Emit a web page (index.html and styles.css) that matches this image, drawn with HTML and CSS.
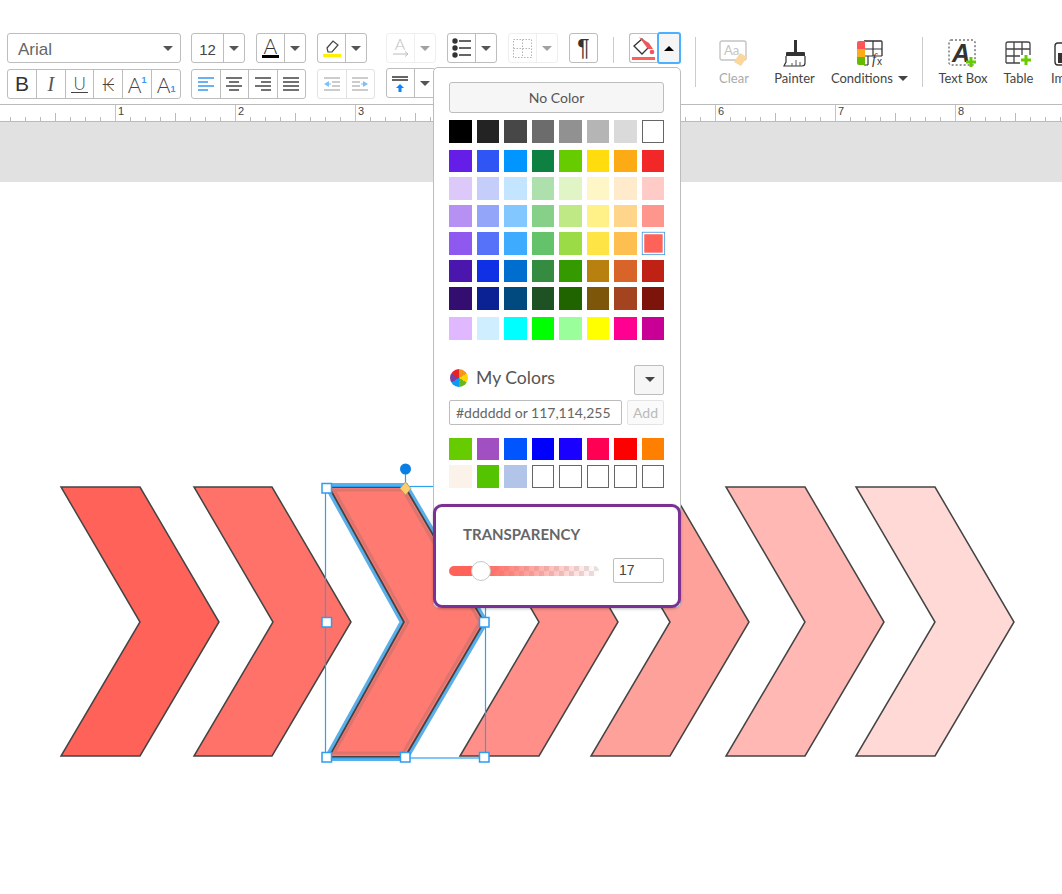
FILE: index.html
```html
<!DOCTYPE html>
<html lang="en">
<head>
<meta charset="utf-8">
<title>Shape fill color</title>
<link rel="stylesheet" href="styles.css">
</head>
<body>
<div class="page">
  <header class="toolbar">
    <div class="rows">
      <div class="row">
        <div class="grp font-select"><span class="font-name">Arial</span><i class="caret"></i></div>
        <div class="grp size"><div class="cell w32 size-val">12</div><div class="cell arrow"><i class="caret"></i></div></div>
        <div class="grp">
          <div class="cell w28"><svg width="27" height="28" viewBox="0 0 27 28"><text x="13.500" y="20" class="ic-a">A</text><rect x="5" y="21" width="17" height="3" fill="#000"/></svg></div>
          <div class="cell arrow"><i class="caret"></i></div>
        </div>
        <div class="grp">
          <div class="cell w28"><svg width="27" height="28" viewBox="0 0 27 28"><path d="M9 14l6-7 5 4-6 7h-4z" fill="#fff" stroke="#444" stroke-width="1.200"/><rect x="5" y="20" width="18" height="3" fill="#ffef00"/></svg></div>
          <div class="cell arrow"><i class="caret"></i></div>
        </div>
        <div class="grp disabled gap-l">
          <div class="cell w28"><svg width="27" height="28" viewBox="0 0 27 28"><text x="13" y="16" class="ic-a small">A</text><path d="M6 20h15m-3-2.500l3 2.500-3 2.500" fill="none" stroke="#888" stroke-width="1"/></svg></div>
          <div class="cell arrow"><i class="caret"></i></div>
        </div>
        <div class="grp">
          <div class="cell w28"><svg width="27" height="28" viewBox="0 0 27 28"><g fill="#333"><circle cx="7" cy="7" r="2.700"/><circle cx="7" cy="14" r="2.700"/><circle cx="7" cy="21" r="2.700"/></g><path d="M11 7h12M11 14h12M11 21h12" stroke="#333" stroke-width="1.300"/></svg></div>
          <div class="cell arrow"><i class="caret"></i></div>
        </div>
        <div class="grp disabled">
          <div class="cell w28"><svg width="27" height="28" viewBox="0 0 27 28"><path d="M4.500 5.500h18v18h-18zM4.500 14.500h18M13.500 5.500v18" fill="none" stroke="#777" stroke-width="1" stroke-dasharray="1.500 1.500"/></svg></div>
          <div class="cell arrow"><i class="caret"></i></div>
        </div>
        <div class="grp pilcrow"><div class="cell">¶</div></div>
        <div class="vsep short"></div>
        <div class="fill-ctl">
          <div class="fill-main"><svg width="26" height="29" viewBox="0 0 26 29"><path d="M3 12l8-7 7 8-7 7z" fill="#fff" stroke="#333" stroke-width="1.300"/><path d="M8 3l10 6 4 6h-5z" fill="#f0565a"/><circle cx="21" cy="18" r="2.300" fill="#f0565a"/><rect x="1" y="23" width="23" height="3" fill="#ff5f57"/></svg></div>
          <div class="fill-arrow"><i class="caret up"></i></div>
        </div>
      </div>
      <div class="row row2">
        <div class="grp w-fmt">
          <div class="cell fmt bold">B</div>
          <div class="cell fmt ital">I</div>
          <div class="cell fmt"><span class="under">U</span></div>
          <div class="cell fmt"><span class="strike">K</span></div>
          <div class="cell fmt"><span class="big-a">A</span><sup class="idx up">1</sup></div>
          <div class="cell fmt"><span class="big-a">A</span><sub class="idx">1</sub></div>
        </div>
        <div class="grp w-align">
          <div class="cell fmt"><svg width="16" height="16" viewBox="0 0 16 16"><path d="M0 2h16M0 6h10M0 10h16M0 14h10" stroke="#3a98f0" stroke-width="1.300"/></svg></div>
          <div class="cell fmt"><svg width="16" height="16" viewBox="0 0 16 16"><path d="M0 2h16M3 6h10M0 10h16M3 14h10" stroke="#444" stroke-width="1.300"/></svg></div>
          <div class="cell fmt"><svg width="16" height="16" viewBox="0 0 16 16"><path d="M0 2h16M6 6h10M0 10h16M6 14h10" stroke="#444" stroke-width="1.300"/></svg></div>
          <div class="cell fmt"><svg width="16" height="16" viewBox="0 0 16 16"><path d="M0 2h16M0 6h16M0 10h16M0 14h16" stroke="#444" stroke-width="1.300"/></svg></div>
        </div>
        <div class="grp disabled-soft w-indent">
          <div class="cell fmt"><svg width="16" height="16" viewBox="0 0 16 16"><path d="M0 2h16M8 6h8M8 10h8M0 14h16" stroke="#999" stroke-width="1.200"/><path d="M0 8l5-3v6z" fill="#7cc0f5"/><path d="M4 8h3" stroke="#7cc0f5"/></svg></div>
          <div class="cell fmt"><svg width="16" height="16" viewBox="0 0 16 16"><path d="M0 2h16M0 6h8M0 10h8M0 14h16" stroke="#999" stroke-width="1.200"/><path d="M16 8l-5-3v6z" fill="#7cc0f5"/><path d="M9 8h3" stroke="#7cc0f5"/></svg></div>
        </div>
        <div class="grp valign">
          <div class="cell w28"><svg width="27" height="28" viewBox="0 0 27 28"><path d="M5 8h16M5 11h16" stroke="#333" stroke-width="1.300"/><path d="M13 15l-4 4h2.500v4h3v-4h2.500z" fill="#0a84ff"/></svg></div>
          <div class="cell arrow"><i class="caret"></i></div>
        </div>
      </div>
    </div>
    <div class="vsep tall first"></div>
    <div class="tool w-clear off">
      <svg width="30" height="27" viewBox="0 0 30 27"><rect x="1" y="1" width="26" height="19" rx="2" fill="none" stroke="#c4c4c4" stroke-width="1.400"/><text x="5" y="15" class="ic-aa">Aa</text><path d="M21 13l7 4-6 9-7-4z" fill="#fbd79b"/></svg>
      <span>Clear</span>
    </div>
    <div class="tool w-painter">
      <svg width="24" height="27" viewBox="0 0 24 27"><rect x="11" y="0" width="3" height="12" fill="#333"/><path d="M4 12h17a1 1 0 0 1 1 1v3H3v-3a1 1 0 0 1 1-1z" fill="#333"/><path d="M3 16v6l-2 4h18q3 0 3-3v-7" fill="#fff" stroke="#333" stroke-width="1.200"/><path d="M9 26v-3M13 26v-6M17 26v-4" stroke="#555"/></svg>
      <span>Painter</span>
    </div>
    <div class="tool w-cond">
      <svg width="27" height="27" viewBox="0 0 27 27"><path d="M8 1h17q1 0 1 1v14" fill="none" stroke="#333" stroke-width="1.300"/><path d="M17 1v15M8 9h18M8 16h18M8 25h4M12 16v9" stroke="#333" stroke-width="1.200"/><path d="M3 1h6v8H1V3q0-2 2-2z" fill="#f55"/><rect x="1" y="9" width="8" height="8" fill="#fbad18"/><path d="M1 17h8v8H3q-2 0-2-2z" fill="#66bb00"/><text x="16" y="24" class="ic-fx">f</text><text x="21" y="25" class="ic-fx x">x</text></svg>
      <span>Conditions <i class="caret dark"></i></span>
    </div>
    <div class="vsep tall"></div>
    <div class="tool w-textbox">
      <svg width="30" height="28" viewBox="0 0 30 28"><rect x="1" y="1" width="26" height="25" rx="2" fill="none" stroke="#333" stroke-dasharray="2 2"/><text x="13" y="23" class="ic-box">A</text><path d="M18 23h10M23 18v10" stroke="#66cc00" stroke-width="3"/></svg>
      <span>Text Box</span>
    </div>
    <div class="tool w-table">
      <svg width="28" height="26" viewBox="0 0 28 26"><path d="M1 22V3q0-2 2-2h20q2 0 2 2v11M1 8h24M1 15h14M1 22h14M9 1v21M17 1v13" fill="none" stroke="#444" stroke-width="1.300"/><path d="M16 19h10M21 14v10" stroke="#66cc00" stroke-width="3"/></svg>
      <span>Table</span>
    </div>
    <div class="tool w-image">
      <svg width="24" height="26" viewBox="0 0 24 26"><rect x="1" y="2" width="22" height="22" rx="3" fill="#fff" stroke="#333" stroke-width="1.400"/><rect x="4" y="12" width="16" height="10" fill="#333"/></svg>
      <span>Image</span>
    </div>
  </header>

  <div class="ruler">
    <div class="inch"></div><div class="inch">1</div><div class="inch">2</div><div class="inch">3</div><div class="inch">4</div><div class="inch">5</div><div class="inch">6</div><div class="inch">7</div><div class="inch">8</div>
  </div>
  <div class="band"></div>

  <main class="canvas">
    <svg class="drawing" width="1062" height="712" viewBox="0 182 1062 712">
      <g stroke="#444" stroke-width="1.500" stroke-linejoin="miter">
        <polygon fill="#ff6259" points="61,487 140,487 219,622 140,756 61,756 140,622"/>
        <polygon fill="#ff7269" points="194,487 272,487 351,622 272,756 194,756 273,622"/>
        <polygon fill="#ff8f88" points="460,756 539,622 460,487 539,487 618,622 539,756"/>
        <polygon fill="#ffa19b" points="591,487 670,487 749,622 670,756 591,756 670,622"/>
        <polygon fill="#ffb8b3" points="726,487 805,487 884,622 805,756 726,756 805,622"/>
        <polygon fill="#ffd9d6" points="856,487 935,487 1014,622 935,756 856,756 935,622"/>
      </g>
      <polygon fill="none" stroke="#5aaeea" stroke-width="8" points="329,487 405,487 484,622 405,757 329,757 404,622"/>
      <polygon fill="#ff7b72" stroke="#444" stroke-width="1.800" points="329,487 405,487 484,622 405,757 329,757 404,622"/>
      <polygon fill="#ff7b72" stroke="#dd746e" stroke-width="3" points="334,490 403,490 480,622 403,753 334,753 408,622"/>
      <rect class="sel" x="325.500" y="486.500" width="160" height="271.500"/>
      <line class="sel" x1="405.500" y1="470" x2="405.500" y2="487"/>
      <circle cx="405.500" cy="469" r="5.500" fill="#0a7fe3"/>
      <g class="handles">
        <rect x="322" y="483.500" width="9.500" height="9.500"/>
        <rect x="322" y="617.500" width="9.500" height="9.500"/>
        <rect x="479.500" y="617.500" width="9.500" height="9.500"/>
        <rect x="322" y="752.500" width="9.500" height="9.500"/>
        <rect x="400.500" y="752.500" width="9.500" height="9.500"/>
        <rect x="479.500" y="752.500" width="9.500" height="9.500"/>
      </g>
      <path d="M405.500 482l5.500 6.500-5.500 6.500-5.500-6.500z" fill="#fdcd6f" stroke="#b89a60" stroke-width=".8"/>
    </svg>
  </main>

  <aside class="popover">
    <button class="no-color">No Color</button>
    <div class="swatches s-first">
      <b style="background:#000"></b><b style="background:#232323"></b><b style="background:#474747"></b><b style="background:#6c6c6c"></b><b style="background:#919191"></b><b style="background:#b5b5b5"></b><b style="background:#dadada"></b><b class="empty"></b>
    </div>
    <div class="swatches">
      <b style="background:#651ee8"></b><b style="background:#2f55f5"></b><b style="background:#0095ff"></b><b style="background:#0d8042"></b><b style="background:#66cc00"></b><b style="background:#ffdc0d"></b><b style="background:#fcab15"></b><b style="background:#f22828"></b>
      <b style="background:#dcc9f9"></b><b style="background:#c5cdfb"></b><b style="background:#c4e5ff"></b><b style="background:#aee0ae"></b><b style="background:#e1f4c6"></b><b style="background:#fff6c7"></b><b style="background:#ffeacb"></b><b style="background:#ffcbc7"></b>
      <b style="background:#b690f3"></b><b style="background:#93a5f9"></b><b style="background:#82c7ff"></b><b style="background:#87d08a"></b><b style="background:#bfe985"></b><b style="background:#fff188"></b><b style="background:#fed58a"></b><b style="background:#ff968d"></b>
      <b style="background:#8f58ee"></b><b style="background:#5672f8"></b><b style="background:#3eabff"></b><b style="background:#64c36a"></b><b style="background:#9bdb45"></b><b style="background:#ffe445"></b><b style="background:#fdc050"></b><b class="current" style="background:#ff6259"></b>
      <b style="background:#4b16ae"></b><b style="background:#0f30e4"></b><b style="background:#006ecf"></b><b style="background:#358b40"></b><b style="background:#349a00"></b><b style="background:#b8800e"></b><b style="background:#d96429"></b><b style="background:#bf2114"></b>
      <b style="background:#330d70"></b><b style="background:#0a2293"></b><b style="background:#004a80"></b><b style="background:#1e5123"></b><b style="background:#206400"></b><b style="background:#7d560a"></b><b style="background:#a44320"></b><b style="background:#7c140c"></b>
    </div>
    <div class="swatches s-last">
      <b style="background:#e0b8ff"></b><b style="background:#cfeeff"></b><b style="background:#00ffff"></b><b style="background:#00ff00"></b><b style="background:#9aff9a"></b><b style="background:#ffff00"></b><b style="background:#ff0090"></b><b style="background:#c80096"></b>
    </div>
    <div class="my-head">
      <i class="wheel"></i><span class="my-title">My Colors</span>
      <div class="my-drop"><i class="caret dark"></i></div>
    </div>
    <div class="add-row">
      <div class="hex">#dddddd or 117,114,255</div>
      <div class="add">Add</div>
    </div>
    <div class="swatches s-mine">
      <b style="background:#66cc00"></b><b style="background:#a050c0"></b><b style="background:#0055ff"></b><b style="background:#0000ff"></b><b style="background:#1a00ff"></b><b style="background:#ff0055"></b><b style="background:#ff0000"></b><b style="background:#ff7f00"></b>
      <b style="background:#fbf3e9"></b><b style="background:#55c400"></b><b style="background:#b2c4e8"></b><b class="empty"></b><b class="empty"></b><b class="empty"></b><b class="empty"></b><b class="empty"></b>
    </div>
    <section class="transparency">
      <h4>TRANSPARENCY</h4>
      <div class="slider-row">
        <div class="slider"><div class="track"></div><i class="thumb"></i></div>
        <div class="value">17</div>
      </div>
    </section>
  </aside>
</div>
</body>
</html>
```
FILE: styles.css
```css
* { box-sizing: border-box; }
html, body { margin: 0; padding: 0; background: #fff; }
.page {
  position: relative;
  width: 1062px;
  height: 894px;
  overflow: hidden;
  display: flex;
  flex-direction: column;
  font-family: Lato, "Liberation Sans", sans-serif;
  color: #555;
}

/* toolbar */
.toolbar {
  height: 104px;
  flex: none;
  display: flex;
  align-items: flex-start;
  padding: 33px 0 0 7px;
  white-space: nowrap;
}
.rows { width: 674px; flex: none; display: flex; flex-direction: column; gap: 6px; }
.row { display: flex; align-items: flex-start; gap: 11px; height: 30px; }
.row2 { height: 30px; }
.grp {
  display: flex;
  height: 30px;
  border: 1px solid #bdbdbd;
  border-radius: 3px;
  background: #fff;
  flex: none;
}
.cell {
  display: flex;
  align-items: center;
  justify-content: center;
  height: 100%;
  border-left: 1px solid #bdbdbd;
  flex: none;
}
.cell:first-child { border-left: 0; }
.w28 { width: 27px; }
.w32 { width: 31px; }
.arrow { width: 21px; }
.size-val { font: 15px "Liberation Sans", sans-serif; color: #444; padding-top: 2px; }
.font-select {
  width: 174px;
  align-items: center;
  justify-content: space-between;
  padding: 0 7px 0 10px;
  font: 17px "Liberation Sans", sans-serif;
  color: #666;
  margin-right: -1px;
}
.font-name { padding-top: 3px; }
.gap-l { margin-left: 8px; }
.caret {
  display: inline-block;
  width: 0;
  height: 0;
  border-left: 5px solid transparent;
  border-right: 5px solid transparent;
  border-top: 5px solid #555;
}
.caret.up { border-top: 0; border-bottom: 5px solid #000; }
.caret.dark { border-top-color: #444; vertical-align: 2px; margin-left: 2px; }
.disabled { border-color: #e2e2e2; opacity: .55; }
.disabled .cell, .disabled-soft .cell { border-left-color: #e2e2e2; }
.disabled .cell:first-child, .disabled-soft .cell:first-child { border-left: 0; }
.disabled-soft { border-color: #e2e2e2; }
.pilcrow { width: 29px; }
.pilcrow .cell { width: 27px; font: 23px "Liberation Sans", sans-serif; color: #333; }
.valign { height: 30px; margin-top: -1px; }
.vsep { background: #ccc; width: 1px; flex: none; }
.vsep.short { height: 26px; margin: 4px 4px 0 4px; }
.vsep.tall { height: 50px; margin-top: 4px; }
.vsep.first { margin-left: 14px; margin-right: 18px; }
.fill-ctl { display: flex; height: 32px; margin-top: -1px; flex: none; }
.fill-main {
  width: 28px;
  height: 30px;
  margin-top: 1px;
  border: 1px solid #bdbdbd;
  border-right: 0;
  border-radius: 3px 0 0 3px;
  display: flex;
  align-items: center;
  justify-content: center;
}
.fill-arrow {
  width: 24px;
  height: 32px;
  border: 2px solid #4db0ff;
  border-radius: 3px;
  background: #f5f5f5;
  display: flex;
  align-items: center;
  justify-content: center;
}
.w-fmt { width: 174px; margin-right: -1px; }
.w-align { width: 115px; }
.w-indent { width: 58px; }
.fmt { flex: 1 1 0; font: 300 20px Lato, "Liberation Sans", sans-serif; color: #444; }
.bold { font: 400 21px "Liberation Sans", sans-serif; color: #333; }
.ital { font: italic 20px "Liberation Serif", serif; color: #555; }
.under { border-bottom: 1.500px solid #444; line-height: 17px; padding: 0 2px; font-size: 17px; }
.strike { text-decoration: line-through; font-size: 18px; line-height: 18px; }
.big-a { font-size: 21px; }
.idx { font: bold 9px "Liberation Sans", sans-serif; color: #3a98f0; align-self: flex-end; margin: 0 0 4px 0; }
.idx.up { align-self: flex-start; margin: 5px 0 0 0; }
.ic-a { font: 300 21px Lato, sans-serif; fill: #333; text-anchor: middle; }
.ic-a.small { font-size: 16px; fill: #888; }
.ic-aa { font: 13px Lato, sans-serif; fill: #c4c4c4; }
.ic-fx { font: italic 14px "Liberation Serif", serif; fill: #333; }
.ic-fx.x { font-size: 10px; font-style: normal; font-family: "Liberation Sans", sans-serif; }
.ic-box { font: italic bold 25px "Liberation Sans", sans-serif; fill: #333; text-anchor: middle; }
.tool {
  flex: none;
  height: 49px;
  display: flex;
  flex-direction: column;
  align-items: center;
  justify-content: flex-end;
  font-size: 13px;
  line-height: 16px;
  color: #444;
  margin-top: 4px;
}
.tool svg { flex: none; margin-bottom: 3px; overflow: visible; }
.tool.off { color: #aaa; }
.w-clear { width: 40px; margin-right: 20px; }
.w-painter { width: 41px; margin-right: 17px; }
.w-cond { width: 75px; margin-right: 15px; }
.w-textbox { width: 48px; margin-left: 16px; margin-right: 17px; }
.w-table { width: 29px; margin-right: 18px; }
.w-image { width: 40px; align-items: flex-start; }
.w-image svg { margin-left: 3px; }

/* ruler */
.ruler {
  flex: none;
  height: 18px;
  display: flex;
  margin-left: -5px;
  border-top: 1px solid #bbb;
  border-bottom: 1px solid #bbb;
}
.inch {
  width: 120px;
  flex: none;
  border-left: 1px solid #c4c4c4;
  padding-left: 2px;
  font: 11px/13px "Liberation Sans", sans-serif;
  color: #444;
  background-image:
    linear-gradient(#bbb, #bbb),
    linear-gradient(to right, #bbb 1px, transparent 1px);
  background-size: 1px 8px, 15px 4px;
  background-repeat: no-repeat, repeat-x;
  background-position: 59px bottom, 14px bottom;
}

.band { flex: none; height: 60px; background: #e1e1e1; }
.canvas { flex: 1; background: #fff; }
.drawing { display: block; }
.sel { fill: none; stroke: #2ea0f0; stroke-width: 1.200; }
.handles rect { fill: #fff; stroke: #2e9cf0; stroke-width: 1.500; }

/* popover */
.popover {
  position: absolute;
  left: 433px;
  top: 67px;
  width: 248px;
  height: 541px;
  background: #fff;
  border: 1px solid #bdbdbd;
  border-radius: 5px;
  padding: 14px 16px 0 15px;
}
.no-color {
  display: block;
  width: 215px;
  height: 31px;
  border: 1px solid #bdbdbd;
  border-radius: 3px;
  background: #f6f6f6;
  font: 14px Lato, sans-serif;
  color: #555;
  padding: 0;
}
.swatches {
  display: grid;
  grid-template-columns: repeat(8, 22.500px);
  gap: 5px;
  width: 215px;
}
.swatches b { display: block; height: 22.500px; }
.s-first { margin: 7px 0 7px; }
.s-last { margin-top: 7.500px; }
.s-mine { margin-top: 13px; }
.swatches .empty { border: 1px solid #666; background: #fff; }
.swatches .current { box-shadow: 0 0 0 2px #fff, 0 0 0 3px #3f95de; transform: scale(.8); }
.my-head { display: flex; align-items: center; margin-top: 25px; height: 30px; }
.wheel {
  width: 18px;
  height: 18px;
  border-radius: 50%;
  margin: 0 0 4px 1px;
  background: conic-gradient(#f7941d 0 60deg, #ffd400 60deg 120deg, #66b821 120deg 180deg, #0a9cf5 180deg 240deg, #7b3fa0 240deg 300deg, #ed2024 300deg 360deg);
}
.my-title { font-size: 17.600px; color: #555; margin: 0 0 5px 8px; }
.my-drop {
  margin-left: auto;
  width: 30px;
  height: 30px;
  border: 1px solid #bdbdbd;
  border-radius: 2px;
  background: #f6f6f6;
  display: flex;
  align-items: center;
  justify-content: center;
}
.add-row { display: flex; justify-content: space-between; margin-top: 5px; }
.hex {
  width: 173px;
  height: 25px;
  border: 1px solid #bdbdbd;
  border-radius: 2px;
  padding-left: 6px;
  font-size: 14px;
  line-height: 23px;
  color: #666;
}
.add {
  width: 37px;
  height: 25px;
  border: 1px solid #e4e4e4;
  border-radius: 2px;
  background: #fafafa;
  font-size: 14px;
  line-height: 23px;
  text-align: center;
  color: #bbb;
}
.transparency {
  position: absolute;
  left: -1px;
  top: 436px;
  width: 248px;
  height: 104px;
  background: #fff;
  border: 3px solid #7b3194;
  border-radius: 9px;
  box-shadow: 0 1px 3px rgba(0, 0, 0, .25);
  padding: 0 14px 0 13px;
}
.transparency h4 {
  margin: 0;
  padding: 17px 0 0 14px;
  font-size: 15px;
  line-height: 20px;
  font-weight: 700;
  color: #666;
}
.slider-row { display: flex; align-items: center; justify-content: space-between; margin-top: 14px; }
.slider { position: relative; width: 150px; height: 10px; }
.track {
  height: 10px;
  border-radius: 5px;
  background:
    linear-gradient(to right, #ff6259 0, #ff6259 20%, rgba(255, 98, 89, 0) 100%),
    conic-gradient(#e4e4e4 25%, #fff 25% 50%, #e4e4e4 50% 75%, #fff 75%) 0 0 / 10px 10px;
}
.thumb {
  position: absolute;
  left: 22px;
  top: -5px;
  width: 20px;
  height: 20px;
  border-radius: 50%;
  background: #fff;
  border: 1px solid #c8c8c8;
}
.value {
  width: 51px;
  height: 25px;
  border: 1px solid #bdbdbd;
  border-radius: 2px;
  padding-left: 5px;
  font: 14px/23px "Liberation Sans", sans-serif;
  color: #444;
}
```
